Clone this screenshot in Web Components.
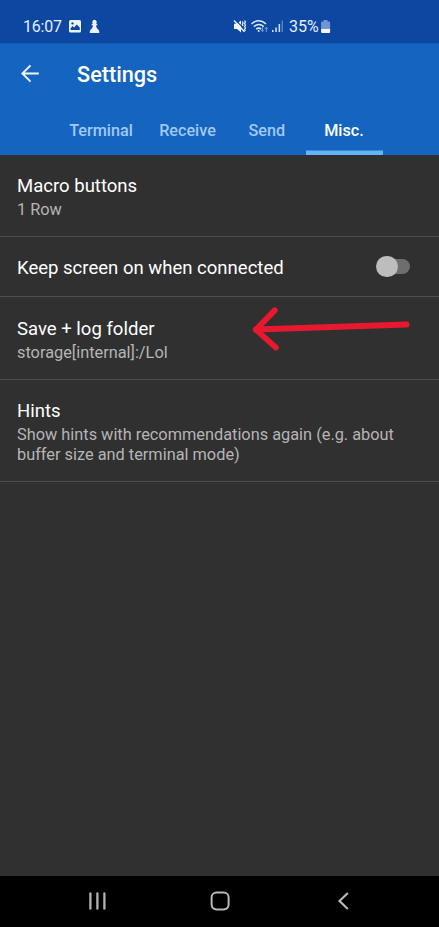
<!DOCTYPE html>
<html lang="en"><head><meta charset="utf-8"><title>Settings</title>
<style>
html,body{margin:0;height:100%;background:#303030}
body{font-family:Roboto,"Liberation Sans",sans-serif;overflow:hidden}
</style></head><body>
<settings-screen></settings-screen>
<script>
const define=(name,html)=>customElements.define(name,class extends HTMLElement{
  constructor(){super();this.attachShadow({mode:'open'}).innerHTML=html;}
});

define('status-bar',`<style>
:host{display:flex;height:43px;background:#0d47a1;color:#e3efff;box-sizing:border-box;padding:10px 0 0 23px;font-size:16px;line-height:33px}
svg{display:block;flex:none}
.left{display:flex;width:210px}
.right{display:flex}
span{white-space:nowrap}
.time{width:39px;margin-right:6px;letter-spacing:-.2px}
.pct{width:30px;margin-left:5px}
</style>
<div class="left"><span class="time">16:07</span>
<svg width="34" height="33" viewBox="68 10 34 33"><path fill="#eaf4ff" fill-rule="evenodd" d="M70.5 20h9q1.500 0 1.500 1.500v9.500q0 1.500-1.500 1.500h-9q-1.500 0-1.500-1.500v-9.500q0-1.500 1.500-1.500zM70.600 30h9.200v-2.200l-3-3.400-2.700 3.200-1.600-1.500-1.900 2.200zM72.500 22.200a1.200 1.200 0 1 0 .01 0z"/><path fill="#eaf4ff" d="M94.500 19.800a2.300 2.300 0 0 1 1.500 4h1.300v1.400h-1.200c.2 2.400 1 3.300 2.200 4.300q1.200 1.100 1 3.500h-9.600q-.2-2.400 1-3.500c1.200-1 2-1.900 2.200-4.300h-1.200v-1.400h1.300a2.300 2.300 0 0 1 1.500-4z"/></svg></div>
<div class="right">
<svg width="51" height="33" viewBox="233 10 51 33"><path fill="#eef6ff" d="M234 23.800h3l4-3.300v12l-4-3.600h-3z"/><path d="M235.200 19.600l10.500 11" stroke="#0d47a1" stroke-width="1.200"/><path d="M234 20.500l10.500 11.200" stroke="#eef6ff" stroke-width="1.400"/><path d="M242.300 21.500l.8 1.500-.8 1.500.8 1.500M244.600 20.500l.8 1.500-.8 1.500.8 1.500-.8 1.500.8 1.500-.8 1.500.8 1.500" stroke="#eef6ff" stroke-width="1.200" fill="none"/>
<g fill="none" stroke="#dceaff" stroke-width="1.500"><path d="M251.500 23.800q7.200-6 14.500 0M253.800 26.600q5-4 10 0M256.200 29.200q2.600-2.100 5 0"/></g><circle cx="258.700" cy="31" r="1" fill="#dceaff"/><path d="M262.500 26.800v4.500m-1.500-1.500l1.500 1.800 1.500-1.800M266.300 32v-4.500m-1.500 1.500l1.500-1.800 1.500 1.800" fill="none" stroke="#6e9de0"/>
<path fill="#cfe2ff" d="M272 30h1.500v2H272zM275.300 27.500h1.500v4.500h-1.500zM278.600 24h1.500v8h-1.500z"/><path fill="#5580c4" d="M281.500 20.500h1.500V32h-1.500z"/></svg>
<span class="pct">35%</span>
<svg width="12" height="33" viewBox="318.500 10 12 33"><path fill="#7195d2" d="M323 20h4v1.500h1.600q1 0 1 1v6.300h-9v-6.300q0-1 1-1h1.400z"/><path fill="#f2f7ff" d="M320.600 28.800h9v3.200q0 1-1 1h-7q-1 0-1-1z"/></svg></div>`);

define('app-bar',`<style>
:host{display:flex;height:62px;background:#1565c0;align-items:center;color:#fff;box-shadow:inset 0 1px #1259af}
svg{width:24px;height:24px;margin:0 35px 2px 18px;flex:none}
h1{margin:1px 0 0;font-size:21.700px;font-weight:500;line-height:30px}
</style><svg viewBox="18 61 24 24" fill="none" stroke="#f2f8ff" stroke-width="1.900"><path d="M38.800 73.500H22.500M30.500 65.400L22.400 73.500l8.100 8.100"/></svg><h1><slot></slot></h1>`);

define('tab-item',`<style>
:host{display:flex;height:50px;box-sizing:border-box;justify-content:center;color:#a1c9f5;font-size:16.200px;font-weight:500;line-height:51px}
:host([selected]){color:#fff;box-shadow:inset 0 -4.500px #64b5f6}
</style><slot></slot>`);

define('tab-strip',`<style>
:host{display:grid;grid-template-columns:97px 76px 81.500px 77px;height:49.500px;padding-left:51px;background:#1565c0}
</style><slot></slot>`);

define('pref-row',`<style>
:host{display:flex;align-items:center;box-sizing:border-box;height:var(--h);padding:0 29px 0 17px;border-bottom:1px solid #4d4d4d}
.text{flex:1;padding-top:var(--pt,2px)}
.title{font-size:18.550px;line-height:25px;color:#fff;white-space:nowrap}
::slotted([slot=summary]){display:block;font-size:16.330px;line-height:19.200px;color:#b5b5b5;margin-top:1px;white-space:pre}
</style><div class="text"><div class="title"><slot></slot></div><slot name="summary"></slot></div><slot name="control"></slot>`);

define('toggle-switch',`<style>
:host{display:flex;align-items:center;width:34px;height:22px}
i{display:block;flex:none}
.thumb{width:21.500px;height:21.500px;border-radius:50%;background:#bdbdbd;z-index:1}
.track{width:25px;height:15px;border-radius:8px;background:#6e6e6e;margin-left:-12.500px}
</style><i class="thumb"></i><i class="track"></i>`);

define('nav-bar',`<style>
:host{display:grid;grid-template-columns:1fr 1fr 1fr;height:51px;box-sizing:border-box;background:#000;padding:0 35px 1px 36.500px}
svg{width:24px;height:24px;place-self:center}
</style>
<svg viewBox="0 0 24 24" stroke="#b2b2b2" stroke-width="2.300" stroke-linecap="round"><path d="M4.400 4.300v15.400M11.400 4.300v15.400M18.400 4.300v15.400"/></svg>
<svg viewBox="0 0 24 24" fill="none" stroke="#b8b8b8" stroke-width="2"><rect x="3.600" y="3.600" width="17" height="16.800" rx="4.800"/></svg>
<svg viewBox="0 0 24 24" fill="none" stroke="#b8b8b8" stroke-width="2.200"><path d="M16.800 4L8.500 12l8.300 8"/></svg>`);

define('pointer-arrow',`<style>
:host{position:absolute;left:245px;top:300px;width:172px;height:56px}
svg{display:block}
</style><svg width="172" height="56" viewBox="245 300 172 56" fill="none" stroke="#e8192f" stroke-linecap="round" stroke-linejoin="round"><path stroke-width="6" d="M406.500 324.500L256 329.600"/><path stroke-width="5.800" d="M274.700 310.400L255.900 329.600l20 18"/></svg>`);

define('settings-screen',`<style>
:host{display:flex;flex-direction:column;position:relative;width:439px;height:927px;background:#303030}
main{flex:1}
</style>
<status-bar></status-bar>
<app-bar>Settings</app-bar>
<tab-strip><tab-item style="padding-left:3px">Terminal</tab-item><tab-item style="padding-left:3px">Receive</tab-item><tab-item style="padding-left:4px">Send</tab-item><tab-item selected>Misc.</tab-item></tab-strip>
<main>
<pref-row style="--h:82.500px">Macro buttons<span slot="summary">1 Row</span></pref-row>
<pref-row style="--h:60px;--pt:3px">Keep screen on when connected<toggle-switch slot="control"></toggle-switch></pref-row>
<pref-row style="--h:83px;--pt:3px">Save + log folder<span slot="summary">storage[internal]:/Lol</span></pref-row>
<pref-row style="--h:102px">Hints<span slot="summary">Show hints with recommendations again (e.g. about
buffer size and terminal mode)</span></pref-row>
</main>
<nav-bar></nav-bar>
<pointer-arrow></pointer-arrow>`);
</script></body></html>
